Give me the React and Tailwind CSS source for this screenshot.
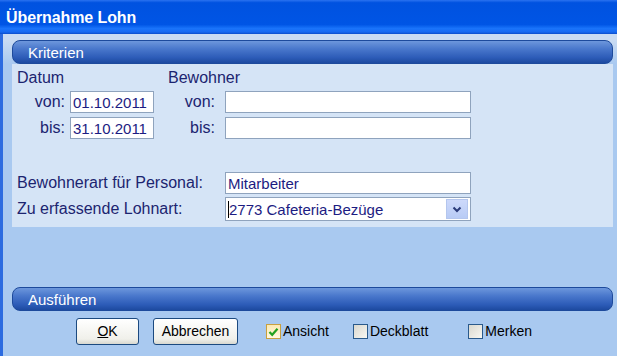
import React from 'react';

function Bar({ title }) {
    return (
        <div className="h-[24px] rounded-[8px] border border-[#1d4a9c] bg-[linear-gradient(to_bottom,#6d97dc_0%,#4a78cc_35%,#2d5cb8_75%,#1d4aa0_100%)] flex items-center pl-[15px] text-white text-[15px] leading-none">
            {title}
        </div>
    );
}

function Field({ value, width }) {
    return (
        <div className={`${width} h-[22px] bg-white border border-[#8fa3bd] flex items-center px-[2px] text-[15px] text-[#1c1c82] leading-none`}>
            {value}
        </div>
    );
}

function Check({ label, checked }) {
    return (
        <div className="flex items-center text-[14px] text-black">
            <div className={`w-[15px] h-[15px] border flex items-center justify-center ${checked ? 'border-[#c8a040] bg-[linear-gradient(to_bottom,#fbe9b4,#fff8e0)]' : 'border-[#2a5a8c] bg-[linear-gradient(135deg,#dad8cf,#f8f7f2)]'}`}>
                {checked && (
                    <svg width="11" height="10" viewBox="0 0 11 10">
                        <path d="M1.5 5 L4.2 7.8 L9.5 1.8" fill="none" stroke="#21a121" strokeWidth="2.2" />
                    </svg>
                )}
            </div>
            <span className="ml-[2px]">{label}</span>
        </div>
    );
}

function Btn({ children, width }) {
    return (
        <div className={`${width} h-[27px] rounded-[3px] border border-[#1c4a80] bg-[linear-gradient(to_bottom,#ffffff,#f0f0ea_80%,#d8d8d0)] flex items-center justify-center text-[14px] text-black`}>
            {children}
        </div>
    );
}

export default function App() {
    return (
        <div className="w-[617px] h-[356px] flex flex-col bg-[#a9c9f0] overflow-hidden font-['Liberation_Sans',Arial,sans-serif]">
            <div className="h-[34px] shrink-0 bg-[linear-gradient(to_bottom,#2a72f0_0%,#0052e0_8%,#0055e5_72%,#1a74fb_84%,#1669f2_94%,#0a4ccc_100%)] flex items-center pl-[6px] pt-[2px]">
                <span className="text-white font-bold text-[16px] tracking-[-0.1px]">Übernahme Lohn</span>
            </div>
            <div className="flex-1 flex flex-col border-l-[3px] border-[#2c6be0] pl-[9px] pr-[4px] pt-[6px] bg-[linear-gradient(to_bottom,#c9dbf3_0px,#c9dbf3_6px,#a9c9f0_30px)]">
                <Bar title="Kriterien" />
                <div className="h-[163px] bg-[#d5e4f6] text-[16px] text-[#1c2470] leading-none">
                    <div className="flex pt-[6px]">
                        <div className="w-[156px] pl-[5px]">
                            <div className="h-[16px]">Datum</div>
                            <div className="flex items-center mt-[5px]">
                                <span className="w-[53px] text-right pr-[5px]">von:</span>
                                <Field value="01.10.2011" width="w-[84px]" />
                            </div>
                            <div className="flex items-center mt-[4px]">
                                <span className="w-[53px] text-right pr-[5px]">bis:</span>
                                <Field value="31.10.2011" width="w-[84px]" />
                            </div>
                        </div>
                        <div className="flex-1">
                            <div className="h-[16px]">Bewohner</div>
                            <div className="flex items-center mt-[5px]">
                                <span className="w-[57px] text-right pr-[10px]">von:</span>
                                <Field value="" width="w-[246px]" />
                            </div>
                            <div className="flex items-center mt-[4px]">
                                <span className="w-[57px] text-right pr-[10px]">bis:</span>
                                <Field value="" width="w-[246px]" />
                            </div>
                        </div>
                    </div>
                    <div className="flex items-center mt-[33px] pl-[5px]">
                        <span className="w-[208px]">Bewohnerart für Personal:</span>
                        <Field value="Mitarbeiter" width="w-[246px]" />
                    </div>
                    <div className="flex items-center mt-[3px] pl-[5px]">
                        <span className="w-[208px]">Zu erfassende Lohnart:</span>
                        <div className="w-[246px] h-[24px] bg-white border border-[#8fa3bd] flex items-center">
                            <div className="flex-1 flex items-center pl-[2px] text-[15px] text-[#1c1c82]">
                                <span className="w-px h-[17px] bg-black"></span>
                                <span>2773 Cafeteria-Bezüge</span>
                            </div>
                            <div className="w-[22px] h-[20px] mr-[2px] bg-[linear-gradient(to_bottom,#cdd9fb,#b8cbf5)] border border-[#b4c6ee] flex items-center justify-center">
                                <svg width="10" height="7" viewBox="0 0 10 7">
                                    <path d="M1.5 1.5 L5 5 L8.5 1.5" fill="none" stroke="#2a3a7a" strokeWidth="2" />
                                </svg>
                            </div>
                        </div>
                    </div>
                </div>
                <div className="mt-[60px]">
                    <Bar title="Ausführen" />
                </div>
                <div className="flex items-center mt-[7px] pl-[64px]">
                    <Btn width="w-[63px]"><span><span className="underline">O</span>K</span></Btn>
                    <div className="ml-[14px]"><Btn width="w-[85px]">Abbrechen</Btn></div>
                    <div className="ml-[28px]"><Check label="Ansicht" checked /></div>
                    <div className="ml-[24px]"><Check label="Deckblatt" /></div>
                    <div className="ml-[40px]"><Check label="Merken" /></div>
                </div>
            </div>
        </div>
    );
}
